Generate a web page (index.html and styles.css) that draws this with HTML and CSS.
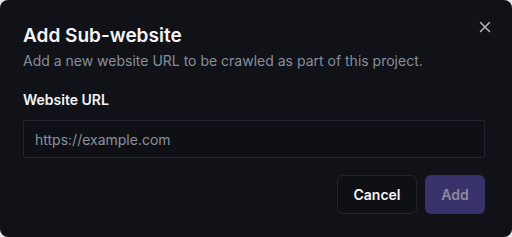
FILE: index.html
```html
<!DOCTYPE html>
<html lang="en">
<head>
    <meta charset="UTF-8">
    <title>Add Sub-website</title>
    <link rel="stylesheet" href="styles.css">
</head>
<body>
    <div class="dialog">
        <button class="close-btn" aria-label="Close">
            <svg width="12" height="12" viewBox="0 0 12 12" fill="none" stroke="currentColor" stroke-width="1.5" stroke-linecap="round">
                <path d="M1.5 1.5l9 9M10.5 1.5l-9 9"/>
            </svg>
        </button>
        <h2 class="title">Add Sub-website</h2>
        <p class="description">Add a new website URL to be crawled as part of this project.</p>

        <label class="field-label" for="url">Website URL</label>
        <input id="url" class="url-input" type="text" placeholder="https://example.com">

        <div class="actions">
            <button class="btn btn-cancel">Cancel</button>
            <button class="btn btn-add" disabled>Add</button>
        </div>
    </div>
</body>
</html>
```

FILE: styles.css
```css
* {
    box-sizing: border-box;
}

html, body {
    height: 100%;
}

body {
    margin: 0;
    background-color: #e9e9ec;
    font-family: Inter, 'Noto Sans', sans-serif;
}

.dialog {
    position: relative;
    height: 100%;
    background-color: #111218;
    border-radius: 8px;
    padding: 23px 27px 23px 23px;
    display: flex;
    flex-direction: column;
}

.close-btn {
    position: absolute;
    top: 21px;
    right: 21px;
    background: none;
    border: none;
    padding: 0;
    width: 12px;
    height: 12px;
    color: #b4b6bd;
    cursor: pointer;
}

.close-btn svg {
    display: block;
}

.title {
    margin: 0;
    color: #f4f4f6;
    font-size: 19px;
    font-weight: 600;
    line-height: 25px;
}

.description {
    margin: 3px 0 0;
    color: #878e9c;
    font-size: 14px;
    line-height: 20px;
}

.field-label {
    margin-top: 19px;
    color: #f4f4f6;
    font-size: 14px;
    font-weight: 600;
    line-height: 20px;
}

.url-input {
    margin-top: 10px;
    height: 38px;
    width: 100%;
    background-color: #0f1016;
    border: 1px solid #222633;
    border-radius: 2px;
    padding: 0 11px;
    color: #e4e4e7;
    font-family: inherit;
    font-size: 14px;
    outline: none;
}

.url-input::placeholder {
    color: #8a909c;
}

.actions {
    margin-top: 17px;
    display: flex;
    justify-content: flex-end;
    gap: 8px;
}

.btn {
    height: 39px;
    border-radius: 6px;
    font-family: inherit;
    font-size: 14px;
    font-weight: 600;
    cursor: pointer;
}

.btn-cancel {
    width: 80px;
    background-color: #0f1016;
    border: 1px solid #22252f;
    color: #f4f4f6;
}

.btn-add {
    width: 60px;
    background-color: #37336a;
    border: none;
    color: #8c8b9c;
}
```
